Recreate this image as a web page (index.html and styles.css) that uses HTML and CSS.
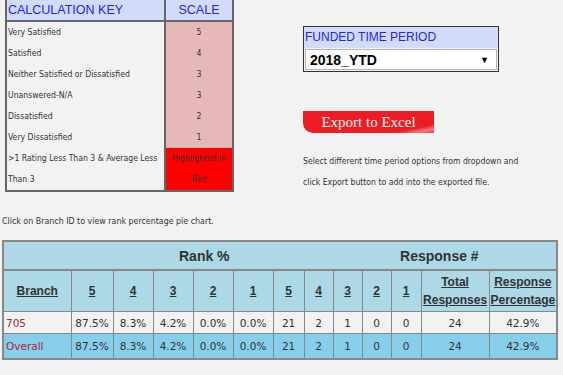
FILE: index.html
```html
<!DOCTYPE html>
<html lang="en">
<head>
<meta charset="UTF-8" />
<title>Branch Survey Results</title>
<link rel="stylesheet" href="styles.css">
</head>
<body>

<div class="top">
  <!-- Calculation key -->
  <table class="key">
    <tr>
      <th class="key-label">CALCULATION KEY</th>
      <th class="key-scale">SCALE</th>
    </tr>
    <tr><td class="key-label">Very Satisfied</td><td class="key-scale">5</td></tr>
    <tr><td class="key-label">Satisfied</td><td class="key-scale">4</td></tr>
    <tr><td class="key-label">Neither Satisfied or Dissatisfied</td><td class="key-scale">3</td></tr>
    <tr><td class="key-label">Unanswered-N/A</td><td class="key-scale">3</td></tr>
    <tr><td class="key-label">Dissatisfied</td><td class="key-scale">2</td></tr>
    <tr><td class="key-label">Very Dissatisfied</td><td class="key-scale">1</td></tr>
    <tr><td class="key-label">&gt;1 Rating Less Than 3 &amp; Average Less<br>Than 3</td><td class="key-scale key-red">Highlighted In<br>Red</td></tr>
  </table>

  <div class="panel">
    <div class="period">
      <div class="period-title">FUNDED TIME PERIOD</div>
      <div class="period-select">
        <span>2018_YTD</span>
        <span class="arrow">&#9660;</span>
      </div>
    </div>

    <div class="export">Export to Excel</div>

    <p class="hint">Select different time period options from dropdown and<br>click Export button to add into the exported file.</p>
  </div>
</div>

<p class="note">Click on Branch ID to view rank percentage pie chart.</p>

<table class="results">
  <colgroup>
    <col style="width:68px"><col style="width:42px"><col style="width:40px"><col style="width:40px"><col style="width:40px"><col style="width:40px">
    <col style="width:31px"><col style="width:29px"><col style="width:29px"><col style="width:29px"><col style="width:30px">
    <col style="width:68px"><col style="width:68px">
  </colgroup>
  <tr class="group-row">
    <th class="group-blank"></th>
    <th class="group rank" colspan="5">Rank %</th>
    <th class="group resp" colspan="7">Response #</th>
  </tr>
  <tr class="head-row">
    <th><a href="#">Branch</a></th>
    <th><a href="#">5</a></th>
    <th><a href="#">4</a></th>
    <th><a href="#">3</a></th>
    <th><a href="#">2</a></th>
    <th><a href="#">1</a></th>
    <th><a href="#">5</a></th>
    <th><a href="#">4</a></th>
    <th><a href="#">3</a></th>
    <th><a href="#">2</a></th>
    <th><a href="#">1</a></th>
    <th><a href="#">Total Responses</a></th>
    <th><a href="#">Response Percentage</a></th>
  </tr>
  <tr class="data-row">
    <td class="branch"><a href="#">705</a></td>
    <td>87.5%</td><td>8.3%</td><td>4.2%</td><td>0.0%</td><td>0.0%</td>
    <td>21</td><td>2</td><td>1</td><td>0</td><td>0</td>
    <td>24</td><td>42.9%</td>
  </tr>
  <tr class="total-row">
    <td class="branch">Overall</td>
    <td>87.5%</td><td>8.3%</td><td>4.2%</td><td>0.0%</td><td>0.0%</td>
    <td>21</td><td>2</td><td>1</td><td>0</td><td>0</td>
    <td>24</td><td>42.9%</td>
  </tr>
</table>

</body>
</html>
```

FILE: styles.css
```css
/* Page */
body {
  margin: 0;
  padding: 0 2px;
  background: #f2f2f2;
  color: #333;
  font-family: "DejaVu Sans Condensed", "DejaVu Sans", sans-serif;
  font-size: 8.6px;
}

.top {
  display: flex;
  align-items: flex-start;
}

/* Calculation key */
.key {
  margin: -2px 0 0 3px;
  width: 229px;
  table-layout: fixed;
  border: 2px solid #666;
  border-spacing: 0;
}
.key th {
  height: 20px;
  padding: 0 1px;
  background: #d2dcfa;
  color: #2424f0;
  font-family: "Liberation Sans", Arial, sans-serif;
  font-size: 12.5px;
  font-weight: normal;
  border-bottom: 2px solid #666;
}
.key th.key-label {
  width: 159px;
  box-sizing: border-box;
  text-align: left;
}
.key td {
  height: 21px;
  padding: 0 1px;
  line-height: 21px;
  white-space: nowrap;
}
.key .key-label {
  border-right: 2px solid #666;
}
.key td.key-scale {
  background: #e6b8b7;
  text-align: center;
}
.key td.key-red {
  background: #ff0000;
}

/* Right panel */
.panel {
  margin-left: 69px;
  padding-top: 26px;
}

.period {
  width: 194px;
  border: 1px solid #333;
  background: #f2f2f2;
}
.period-title {
  height: 21px;
  line-height: 21px;
  padding-left: 1px;
  background: #d2dcfa;
  color: #2424f0;
  font-family: "Liberation Sans", Arial, sans-serif;
  font-size: 12px;
}
.period-select {
  display: flex;
  justify-content: space-between;
  align-items: center;
  height: 19px;
  margin: 1px;
  padding: 0 7px 0 4px;
  background: #fff;
  border: 1px solid #b4b4b4;
  color: #000;
  font-family: "Liberation Sans", Arial, sans-serif;
  font-size: 14px;
  font-weight: bold;
}
.period-select .arrow {
  font-size: 9px;
}

.export {
  position: relative;
  overflow: hidden;
  width: 131px;
  height: 22px;
  margin-top: 39px;
  background: #ed1c24;
  border-radius: 0 0 0 10px;
  color: #fff;
  font-family: "Liberation Serif", "Times New Roman", serif;
  font-size: 15px;
  line-height: 22px;
  text-align: center;
}
.export::after {
  content: "";
  position: absolute;
  right: 0;
  bottom: 0;
  width: 40px;
  height: 9px;
  background: linear-gradient(168deg, rgba(255,255,255,0) 50%, rgba(255,255,255,0.4) 75%, rgba(255,255,255,0.15) 100%);
}

.hint {
  margin: 18px 0 0;
  font-size: 8.6px;
  line-height: 21px;
}

.note {
  margin: 18px 0 8px;
  font-size: 8.8px;
  line-height: 21px;
}

/* Results table */
.results {
  width: 556px;
  table-layout: fixed;
  border-collapse: collapse;
  border: 2px solid #888;
  font-family: "DejaVu Sans", Verdana, sans-serif;
  font-size: 10.5px;
  color: #333;
}
.results th,
.results td {
  border: 1px solid #888;
  padding: 0;
  text-align: center;
}
.results th {
  background: #add8e6;
  font-family: "Liberation Sans", Arial, sans-serif;
  font-size: 12px;
  line-height: 18px;
}
.results th a {
  color: #333;
}
.group-row th {
  height: 27px;
  font-size: 14px;
  text-align: left;
  border-left: none;
  border-right: none;
  border-bottom-width: 2px;
}
.group.rank {
  padding-left: 108px;
}
.group.resp {
  padding-left: 127px;
}
.head-row th {
  height: 40px;
}
.data-row td {
  height: 21px;
  background: #f2f2f2;
}
.total-row td {
  height: 24px;
  background: #87ceeb;
}
.results td.branch {
  text-align: left;
  padding-left: 2px;
  color: #a8283a;
}
.results td.branch a {
  color: #a8283a;
  text-decoration: none;
}
```
